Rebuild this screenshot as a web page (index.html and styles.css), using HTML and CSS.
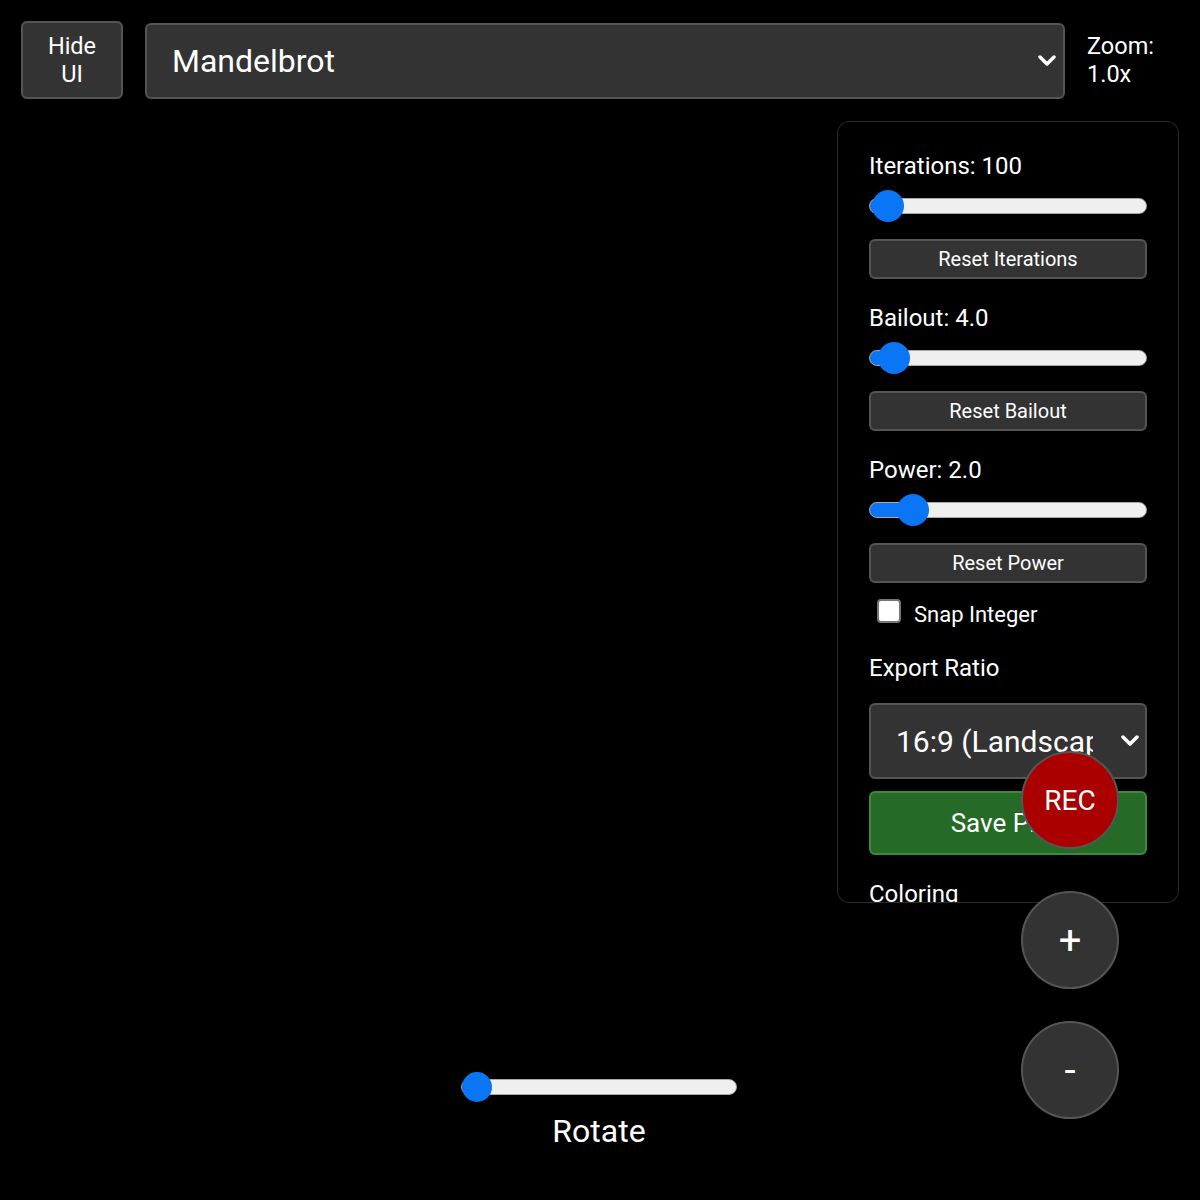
FILE: index.html
```html
<!DOCTYPE html>
<html>
<head>
    <title>Fractal Explorer</title>
    <link rel="stylesheet" href="styles.css">
</head>
<body>
    <canvas id="fractal" class="fractal"></canvas>

    <div class="topbar">
        <button class="btn hide-btn">Hide UI</button>
        <div class="select-wrap fractal-select">
            <select>
                <option>Mandelbrot</option>
                <option>Julia</option>
                <option>Burning Ship</option>
            </select>
            <svg class="chevron" viewBox="0 0 20 12"><path d="M3 2 L10 9 L17 2" /></svg>
        </div>
        <div class="zoom-label">Zoom:<br>1.0x</div>
    </div>

    <div class="panel">
        <div class="group">
            <label>Iterations: <span id="iterVal">100</span></label>
            <input type="range" class="slider" min="50" max="5000" value="100">
            <button class="btn reset-btn">Reset Iterations</button>
        </div>
        <div class="group">
            <label>Bailout: <span>4.0</span></label>
            <input type="range" class="slider" min="2" max="64" step="0.1" value="4">
            <button class="btn reset-btn">Reset Bailout</button>
        </div>
        <div class="group">
            <label>Power: <span>2.0</span></label>
            <input type="range" class="slider" min="1" max="10" step="0.1" value="2">
            <button class="btn reset-btn">Reset Power</button>
        </div>
        <div class="check-row">
            <input type="checkbox" id="snap">
            <label for="snap">Snap Integer</label>
        </div>
        <div class="group export">
            <label>Export Ratio</label>
            <div class="select-wrap ratio-select">
                <select>
                    <option>16:9 (Landscape)</option>
                    <option>9:16 (Portrait)</option>
                    <option>1:1 (Square)</option>
                </select>
                <svg class="chevron" viewBox="0 0 20 12"><path d="M3 2 L10 9 L17 2" /></svg>
            </div>
            <button class="btn save-btn">Save PNG</button>
        </div>
        <div class="group">
            <label>Coloring</label>
        </div>
    </div>

    <button class="round-btn rec-btn">REC</button>
    <button class="round-btn zoom-in">+</button>
    <button class="round-btn zoom-out">-</button>

    <div class="rotate">
        <input type="range" class="slider rotate-slider" min="0" max="360" value="0">
        <div class="rotate-label">Rotate</div>
    </div>

    <script>
        // paint the filled part of each slider up to the thumb centre
        function paintSlider(el) {
            const thumb = el.classList.contains('rotate-slider') ? 30 : 32;
            const w = el.offsetWidth;
            const t = (el.value - el.min) / (el.max - el.min);
            const px = thumb / 2 + t * (w - thumb);
            el.style.background = `linear-gradient(to right, #0a75f5 ${px}px, #efefef ${px}px)`;
        }
        document.querySelectorAll('.slider').forEach(el => {
            paintSlider(el);
            el.addEventListener('input', () => paintSlider(el));
        });
    </script>
</body>
</html>
```

FILE: styles.css
```css
body {
    margin: 0;
    background: #000;
    color: #fff;
    font-family: Roboto, "Noto Sans", sans-serif;
    width: 1200px;
    height: 1200px;
    overflow: hidden;
    position: relative;
}
.fractal {
    position: absolute;
    left: 0;
    top: 0;
    width: 1200px;
    height: 1200px;
    background: #000;
}
.topbar {
    position: relative;
    display: flex;
    align-items: flex-start;
    padding: 21px 0 0 21px;
}
.btn {
    background: #333;
    color: #fff;
    border: 2px solid #555;
    border-radius: 6px;
    font-family: inherit;
    cursor: pointer;
}
.hide-btn {
    width: 102px;
    height: 78px;
    font-size: 23.5px;
    line-height: 28px;
    padding: 0 16px;
}
.select-wrap {
    position: relative;
}
.select-wrap select {
    appearance: none;
    -webkit-appearance: none;
    width: 100%;
    height: 100%;
    background: #333;
    color: #fff;
    border: 2px solid #555;
    border-radius: 6px;
    font-family: inherit;
    font-size: 30px;
    padding: 0 52px 0 25px;
    outline: none;
}
.chevron {
    position: absolute;
    width: 20px;
    height: 12px;
    top: 50%;
    margin-top: -6px;
    pointer-events: none;
}
.chevron path {
    fill: none;
    stroke: #fff;
    stroke-width: 3.5;
    stroke-linecap: round;
    stroke-linejoin: round;
}
.fractal-select {
    width: 920px;
    height: 76px;
    margin: 2px 0 0 22px;
}
.fractal-select select {
    font-size: 32px;
}
.fractal-select .chevron {
    right: 8px;
}
.zoom-label {
    margin: 11px 0 0 22px;
    font-size: 23.5px;
    line-height: 28px;
}

.panel {
    position: absolute;
    left: 837px;
    top: 121px;
    width: 342px;
    height: 782px;
    box-sizing: border-box;
    padding: 31px;
    border: 1px solid #2a2a2a;
    border-radius: 12px;
    background: #000;
    overflow: hidden;
}
.group {
    display: flex;
    flex-direction: column;
    margin-bottom: 26px;
}
.group label {
    font-size: 24px;
    line-height: 26px;
}
.slider {
    -webkit-appearance: none;
    appearance: none;
    margin: 0;
    width: 278px;
    height: 16px;
    border-radius: 8px;
    border: 1px solid #a9a9a9;
    box-sizing: border-box;
    background: #efefef;
    outline: none;
}
.slider::-webkit-slider-thumb {
    -webkit-appearance: none;
    width: 32px;
    height: 32px;
    border-radius: 50%;
    background: #0a75f5;
    border: none;
}
.group .slider {
    margin: 19px 0 7px;
}
.reset-btn {
    height: 40px;
    margin-top: 18px;
    font-size: 20px;
}
.check-row {
    display: flex;
    align-items: flex-start;
    margin: -10px 0 26px 8px;
}
.check-row input {
    -webkit-appearance: none;
    appearance: none;
    width: 24px;
    height: 24px;
    margin: 0;
    background: #fff;
    border: 2px solid #767676;
    border-radius: 4px;
}
.check-row label {
    margin: 2px 0 0 13px;
    font-size: 22px;
    line-height: 28px;
}
.ratio-select {
    height: 76px;
    margin-top: 22px;
}
.ratio-select .chevron {
    right: 7px;
}
.save-btn {
    height: 64px;
    margin-top: 12px;
    background: #266a28;
    border-color: #3c8a3e;
    font-size: 26px;
}
.export {
    margin-bottom: 26px;
}

.round-btn {
    position: absolute;
    left: 1021px;
    width: 98px;
    height: 98px;
    border-radius: 50%;
    background: #333;
    border: 2px solid #555;
    color: #fff;
    font-family: inherit;
    font-size: 40px;
    padding: 0;
    cursor: pointer;
}
.rec-btn {
    top: 751px;
    background: #aa0000;
    font-size: 28px;
}
.zoom-in {
    top: 891px;
}
.zoom-out {
    top: 1021px;
}

.rotate {
    position: absolute;
    left: 461px;
    top: 1079px;
    width: 276px;
    display: flex;
    flex-direction: column;
    align-items: center;
}
.rotate-slider {
    width: 276px;
}
.rotate-slider::-webkit-slider-thumb {
    width: 30px;
    height: 30px;
}
.rotate-label {
    margin-top: 18px;
    font-size: 32px;
    line-height: 36px;
}
```
